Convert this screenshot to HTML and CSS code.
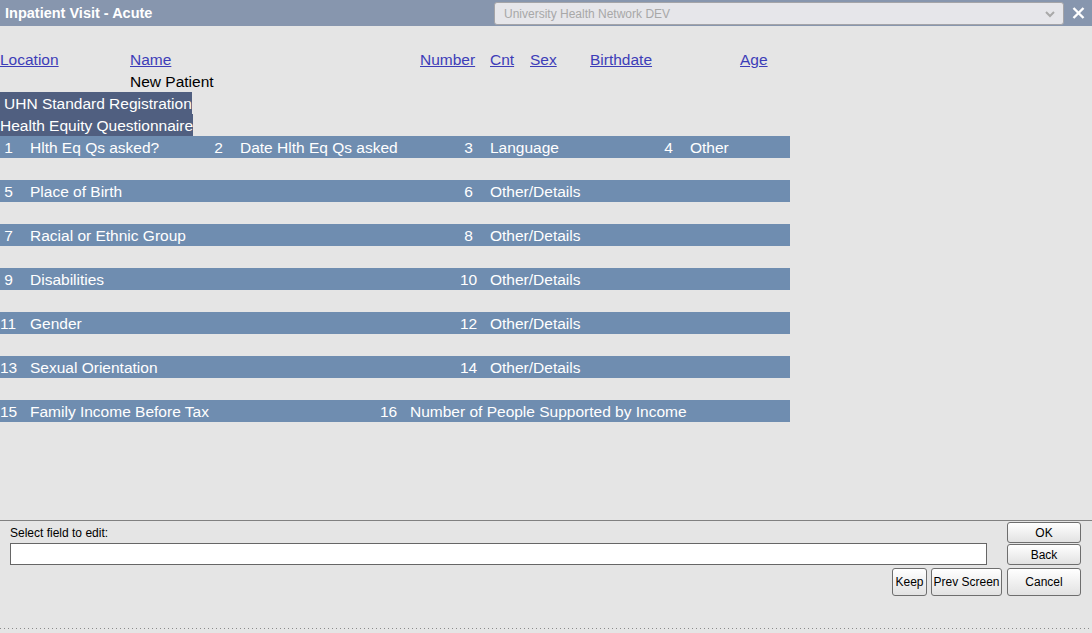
FILE: index.html
```html
<!DOCTYPE html>
<html lang="en">
<head>
  <meta charset="UTF-8">
  <title>Inpatient Visit - Acute</title>
  <link rel="stylesheet" href="styles.css">
</head>
<body>
  <div class="titlebar">
    <div class="title">Inpatient Visit - Acute</div>
    <div class="site-select">
      <span>University Health Network DEV</span>
      <svg class="chev" width="10" height="7" viewBox="0 0 10 7"><polyline points="1,1 5,5 9,1" fill="none" stroke="#a9a9a9" stroke-width="2"/></svg>
    </div>
    <div class="close">
      <svg width="13" height="12" viewBox="0 0 13 12"><path d="M1.5 1 L11.5 11 M11.5 1 L1.5 11" stroke="#fff" stroke-width="2.4"/></svg>
    </div>
  </div>

  <div class="content">
    <div class="line headers">
      <a href="#" class="h-loc">Location</a>
      <a href="#" class="h-name">Name</a>
      <a href="#" class="h-num">Number</a>
      <a href="#" class="h-cnt">Cnt</a>
      <a href="#" class="h-sex">Sex</a>
      <a href="#" class="h-bd">Birthdate</a>
      <a href="#">Age</a>
    </div>
    <div class="line patient">New Patient</div>
    <div class="line"><span class="section">UHN Standard Registration</span></div>
    <div class="line"><span class="section sub">Health Equity Questionnaire</span></div>

    <div class="rows">
      <div class="row">
        <div class="field w210"><span class="n"> 1</span>Hlth Eq Qs asked?</div>
        <div class="field w250"><span class="n"> 2</span>Date Hlth Eq Qs asked</div>
        <div class="field w200"><span class="n"> 3</span>Language</div>
        <div class="field"><span class="n"> 4</span>Other</div>
      </div>
      <div class="row">
        <div class="field w460"><span class="n"> 5</span>Place of Birth</div>
        <div class="field"><span class="n"> 6</span>Other/Details</div>
      </div>
      <div class="row">
        <div class="field w460"><span class="n"> 7</span>Racial or Ethnic Group</div>
        <div class="field"><span class="n"> 8</span>Other/Details</div>
      </div>
      <div class="row">
        <div class="field w460"><span class="n"> 9</span>Disabilities</div>
        <div class="field"><span class="n">10</span>Other/Details</div>
      </div>
      <div class="row">
        <div class="field w460"><span class="n">11</span>Gender</div>
        <div class="field"><span class="n">12</span>Other/Details</div>
      </div>
      <div class="row">
        <div class="field w460"><span class="n">13</span>Sexual Orientation</div>
        <div class="field"><span class="n">14</span>Other/Details</div>
      </div>
      <div class="row">
        <div class="field w380"><span class="n">15</span>Family Income Before Tax</div>
        <div class="field"><span class="n">16</span>Number of People Supported by Income</div>
      </div>
    </div>
  </div>

  <div class="footer">
    <div class="footer-top">
      <div class="edit-area">
        <label for="editField">Select field to edit:</label>
        <input type="text" id="editField">
      </div>
      <div class="side-buttons">
        <button class="btn">OK</button>
        <button class="btn">Back</button>
      </div>
    </div>
    <div class="bottom-buttons">
      <button class="btn tall keep">Keep</button>
      <button class="btn tall prev">Prev Screen</button>
      <button class="btn tall wide">Cancel</button>
    </div>
    <div class="dots"></div>
  </div>
</body>
</html>
```

FILE: styles.css
```css
* {
  box-sizing: border-box;
}

body {
  margin: 0;
  width: 1092px;
  height: 633px;
  overflow: hidden;
  background: #e5e5e5;
  font-family: "Liberation Sans", Arial, sans-serif;
  color: #000;
}

/* title bar */
.titlebar {
  height: 26px;
  background: #8796ae;
  display: flex;
  align-items: center;
}

.title {
  color: #fff;
  font-weight: bold;
  font-size: 14.5px;
  padding-left: 5px;
}

.site-select {
  margin-left: auto;
  width: 570px;
  height: 23px;
  margin-top: 1px;
  background: #e6e6ea;
  border: 1px solid #a4a4a8;
  border-radius: 3px;
  display: flex;
  align-items: center;
  padding: 0 8px 0 9px;
  font-size: 12px;
  color: #a8a8a8;
}

.site-select .chev {
  margin-left: auto;
  margin-top: 1px;
}

.close {
  width: 28px;
  display: flex;
  justify-content: center;
  align-items: center;
}

/* main area */
.content {
  height: 494px;
  padding-top: 22px;
  font-size: 15.5px;
}

.line {
  height: 22px;
  line-height: 23px;
  white-space: nowrap;
}

.headers {
  display: flex;
}

.headers a {
  color: #3d3db8;
}

.h-loc { width: 130px; }
.h-name { width: 290px; }
.h-num { width: 70px; }
.h-cnt { width: 40px; }
.h-sex { width: 60px; }
.h-bd { width: 150px; }

.patient {
  padding-left: 130px;
}

.section {
  display: inline-block;
  height: 22px;
  background: #505f80;
  color: #fff;
  padding-left: 4px;
}

.section.sub {
  padding-left: 0;
}

.rows {
  display: flex;
  flex-direction: column;
  gap: 22px;
}

.row {
  width: 790px;
  height: 22px;
  line-height: 23px;
  background: #6f8db0;
  color: #fff;
  display: flex;
  white-space: nowrap;
}

.field {
  display: flex;
}

.n {
  width: 30px;
  white-space: pre;
}

.w210 { width: 210px; }
.w250 { width: 250px; }
.w200 { width: 200px; }
.w380 { width: 380px; }
.w460 { width: 460px; }

/* footer */
.footer {
  height: 113px;
  border-top: 1px solid #808080;
  display: flex;
  flex-direction: column;
  padding-right: 11px;
}

.footer-top {
  display: flex;
}

.edit-area {
  flex: 1;
  padding: 4px 20px 0 10px;
  display: flex;
  flex-direction: column;
}

.edit-area label {
  font-size: 12px;
  line-height: 17px;
  height: 18px;
}

.edit-area input {
  height: 22px;
  border: 1px solid #666;
  background: #fff;
  font-family: inherit;
}

.side-buttons {
  width: 74px;
  padding-top: 1px;
  display: flex;
  flex-direction: column;
  gap: 1px;
}

.btn {
  height: 21px;
  font-family: "Liberation Sans", Arial, sans-serif;
  font-size: 12px;
  color: #000;
  background: linear-gradient(#ffffff, #e2e2e2);
  border: 1px solid #6e6e6e;
  border-radius: 3px;
  padding: 0;
  white-space: nowrap;
  cursor: pointer;
}

.bottom-buttons {
  display: flex;
  justify-content: flex-end;
  gap: 4px;
  margin-top: 3px;
}

.btn.tall {
  height: 28px;
}

.btn.keep {
  width: 35px;
}

.btn.prev {
  width: 71px;
}

.btn.wide {
  width: 74px;
  margin-left: 1px;
}

.dots {
  margin-top: auto;
  margin-bottom: 4px;
  margin-right: -11px;
  height: 1px;
  background: repeating-linear-gradient(to right, #8a8a8a 0 1px, transparent 1px 4px);
}
```
